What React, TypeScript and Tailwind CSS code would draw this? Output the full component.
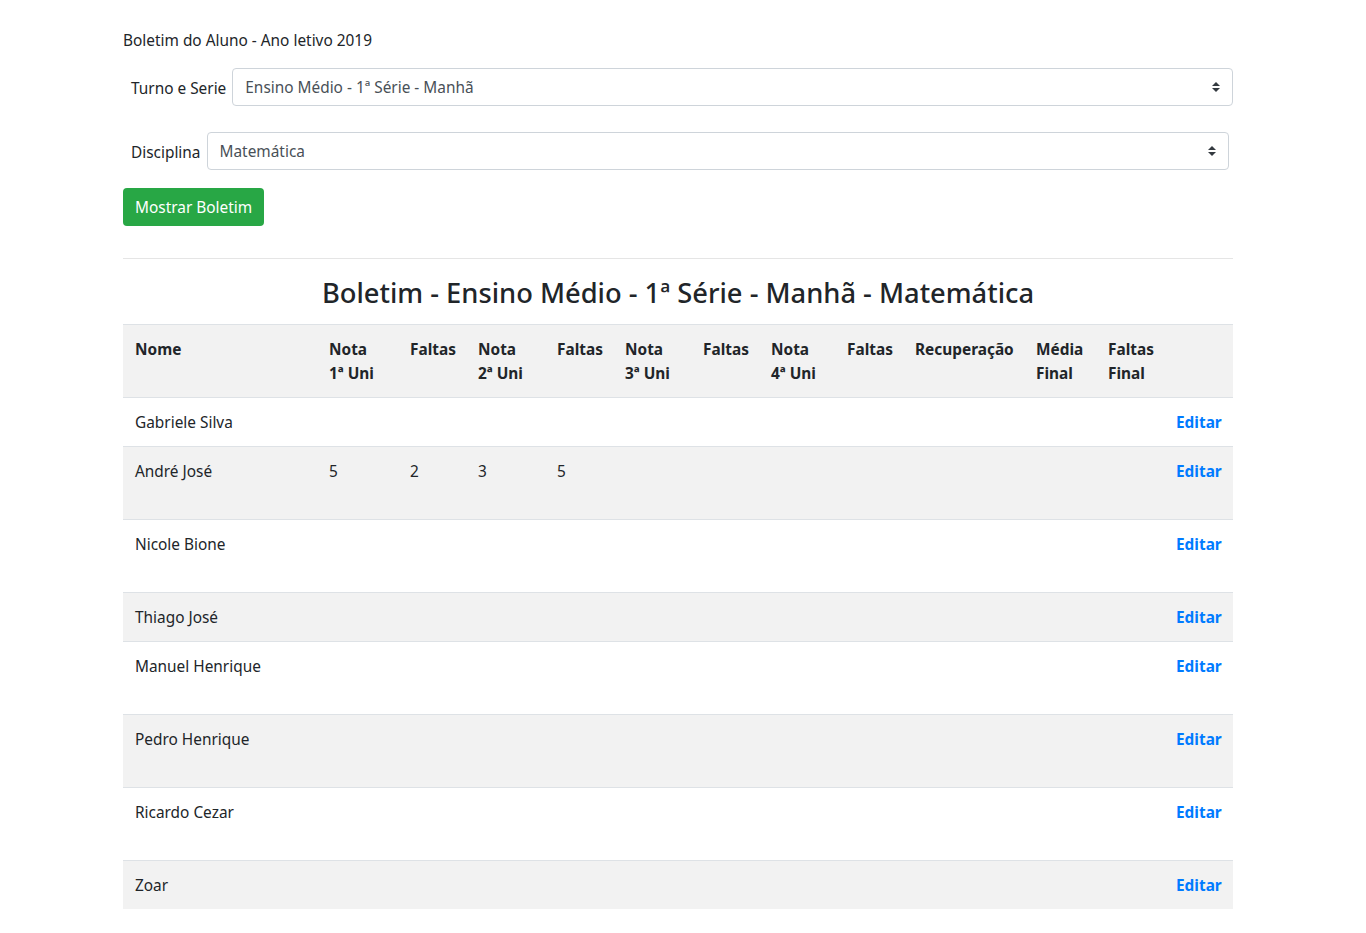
import React from 'react';

type Aluno = {
  nome: string;
  notas: string[];
  alta: boolean;
};

const alunos: Aluno[] = [
  { nome: 'Gabriele Silva', notas: [], alta: false },
  { nome: 'André José', notas: ['5', '2', '3', '5'], alta: true },
  { nome: 'Nicole Bione', notas: [], alta: true },
  { nome: 'Thiago José', notas: [], alta: false },
  { nome: 'Manuel Henrique', notas: [], alta: true },
  { nome: 'Pedro Henrique', notas: [], alta: true },
  { nome: 'Ricardo Cezar', notas: [], alta: true },
  { nome: 'Zoar', notas: [], alta: false },
];

// larguras das colunas, medidas no print
const colunas = [194, 81, 68, 79, 68, 78, 68, 76, 68, 121, 72, 68, 69];

function SelectArrow() {
  return (
    <svg width="8" height="10" viewBox="0 0 4 5" className="shrink-0">
      <path d="M2 0L0 2h4zm0 5L0 3h4z" fill="#343a40" />
    </svg>
  );
}

function FakeSelect({ value, className = '' }: { value: string; className?: string }) {
  return (
    <div
      className={`flex h-[38px] flex-1 items-center justify-between rounded-[4px] border border-[#ced4da] bg-white pl-3 pr-3 text-[#495057] ${className}`}
    >
      <span className="pt-[2px]">{value}</span>
      <SelectArrow />
    </div>
  );
}

function Th({ children }: { children?: React.ReactNode }) {
  return (
    <th className="border-y border-[#dee2e6] px-3 pt-[13px] pb-[11px] text-left align-top font-bold leading-6">
      {children}
    </th>
  );
}

export default function App() {
  return (
    <div
      className="min-h-screen bg-white text-[15.4px] leading-6 text-[#212529]"
      style={{ fontFamily: '"Segoe UI", "Noto Sans", sans-serif' }}
    >
      <div className="ml-[123px] w-[1110px] pt-[29px]">
        <p>Boletim do Aluno - Ano letivo 2019</p>

        <div className="mt-[15px] flex items-center">
          <label className="pl-2 pr-[6px] pt-[4px]">Turno e Serie</label>
          <FakeSelect value="Ensino Médio - 1ª Série - Manhã" />
        </div>

        <div className="mt-[26px] flex items-center">
          <label className="pl-2 pr-[6px] pt-[4px]">Disciplina</label>
          <FakeSelect value="Matemática" className="mr-1" />
        </div>

        <button className="mt-[18px] h-[38px] rounded-[4px] bg-[#28a745] px-3 pt-[2px] text-white">
          Mostrar Boletim
        </button>

        <hr className="mt-[32px] border-t border-[#e5e5e5]" />

        <h3 className="mt-[17px] mb-[14px] h-[34px] text-center text-[27.3px] font-medium leading-[34px]">
          Boletim - Ensino Médio - 1ª Série - Manhã - Matemática
        </h3>

        <table className="w-[1110px] table-fixed border-collapse">
          <colgroup>
            {colunas.map((w, i) => (
              <col key={i} style={{ width: w }} />
            ))}
          </colgroup>
          <thead>
            <tr className="bg-[#f2f2f2]">
              <Th>Nome</Th>
              <Th>
                Nota
                <br />
                1ª Uni
              </Th>
              <Th>Faltas</Th>
              <Th>
                Nota
                <br />
                2ª Uni
              </Th>
              <Th>Faltas</Th>
              <Th>
                Nota
                <br />
                3ª Uni
              </Th>
              <Th>Faltas</Th>
              <Th>
                Nota
                <br />
                4ª Uni
              </Th>
              <Th>Faltas</Th>
              <Th>Recuperação</Th>
              <Th>
                Média
                <br />
                Final
              </Th>
              <Th>
                Faltas
                <br />
                Final
              </Th>
              <Th />
            </tr>
          </thead>
          <tbody>
            {alunos.map((a, i) => (
              <tr key={a.nome} className={i % 2 === 1 ? 'bg-[#f2f2f2]' : 'bg-white'}>
                <td className="border-t border-[#dee2e6] px-3 pt-[13px] pb-[11px] align-top">
                  <div className="whitespace-nowrap">{a.nome}</div>
                  {a.alta && <div className="h-6" />}
                </td>
                {Array.from({ length: 11 }).map((_, j) => (
                  <td key={j} className="border-t border-[#dee2e6] px-3 pt-[13px] pb-[11px] align-top">
                    {a.notas[j] ?? ''}
                  </td>
                ))}
                <td className="border-t border-[#dee2e6] px-3 pt-[13px] pb-[11px] text-right align-top">
                  <a href="#" className="font-bold text-[#007bff]">
                    Editar
                  </a>
                </td>
              </tr>
            ))}
          </tbody>
        </table>
      </div>
    </div>
  );
}
